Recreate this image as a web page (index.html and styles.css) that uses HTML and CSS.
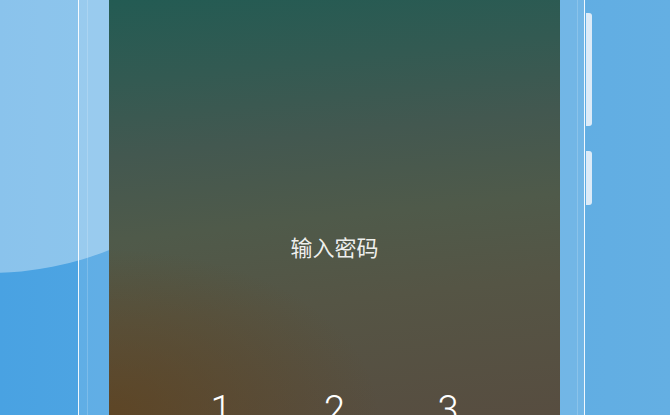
FILE: index.html
```html
<!DOCTYPE html>
<html lang="zh-CN">
<head>
    <meta charset="UTF-8">
    <meta name="viewport" content="width=device-width, initial-scale=1.0">
    <title>输入密码</title>
    <link rel="stylesheet" href="styles.css">
</head>
<body>

<div class="scene">
    <div class="blob"></div>

    <div class="phone">
        <div class="bezel">
            <div class="screen">
                <p class="prompt">输入密码</p>
                <div class="keypad">
                    <span class="key">1</span>
                    <span class="key">2</span>
                    <span class="key">3</span>
                </div>
            </div>
        </div>
        <span class="side-btn btn-long"></span>
        <span class="side-btn btn-short"></span>
    </div>
</div>

</body>
</html>
```

FILE: styles.css
```css
html, body {
    margin: 0;
    padding: 0;
}
body {
    font-family: "Noto Sans CJK SC", "Noto Sans", sans-serif;
    overflow: hidden;
}
.scene {
    position: relative;
    width: 670px;
    height: 415px;
    overflow: hidden;
    background: linear-gradient(90deg, #49a2e2 0%, #58a9e3 45%, #64afe3 100%);
}
.blob {
    position: absolute;
    left: -330px;
    top: -367px;
    width: 640px;
    height: 640px;
    border-radius: 50%;
    background: rgba(255, 255, 255, 0.36);
}
.phone {
    position: relative;
    display: flex;
    width: 491px;
    height: 415px;
    margin-left: 78px;
    padding: 0 6px 0 8px;
    border-left: 1.5px solid rgba(255, 255, 255, 0.9);
    border-right: 1.5px solid rgba(255, 255, 255, 0.9);
    background: rgba(255, 255, 255, 0.11);
}
.bezel {
    flex: 1;
    display: flex;
    padding: 0 17px 0 21px;
    border-left: 1px solid rgba(255, 255, 255, 0.18);
    border-right: 1px solid rgba(255, 255, 255, 0.18);
}
.screen {
    flex: 1;
    display: flex;
    flex-direction: column;
    align-items: center;
    padding-top: 231px;
    background:
        radial-gradient(ellipse 60% 40% at 0% 100%, rgba(96, 66, 28, 0.75), rgba(96, 66, 28, 0)),
        linear-gradient(174deg, #235b53 0%, #335a52 18%, #435850 34%, #4f5a4a 52%, #555545 70%, #574d40 100%);
}
.prompt {
    margin: 0;
    font-size: 22px;
    line-height: 30px;
    color: rgba(255, 255, 255, 0.92);
}
.keypad {
    display: grid;
    grid-template-columns: repeat(3, 80px);
    column-gap: 33.5px;
    margin-top: 129px;
}
.key {
    text-align: center;
    font-family: Roboto, "Liberation Sans", sans-serif;
    font-weight: 300;
    font-size: 38px;
    line-height: 40px;
    color: #fff;
}
.side-btn {
    position: absolute;
    left: 100%;
    margin-left: 1.5px;
    width: 6px;
    border-radius: 0 3px 3px 0;
    background: #dcebf8;
}
.btn-long {
    top: 13px;
    height: 113px;
}
.btn-short {
    top: 151px;
    height: 54px;
}
```
